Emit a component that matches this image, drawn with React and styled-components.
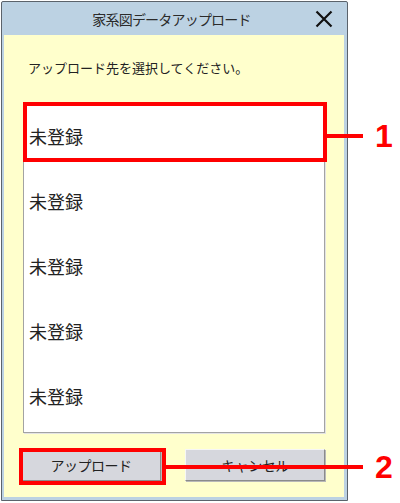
import React from 'react';
import styled, { createGlobalStyle } from 'styled-components';

const GlobalStyle = createGlobalStyle`
  html, body {
    margin: 0;
    padding: 0;
    background: #fff;
  }
  body {
    font-family: "Noto Sans CJK JP", "Noto Sans", sans-serif;
    color: #222;
  }
`;

const Stage = styled.div`
  position: relative;
  width: 400px;
  height: 503px;
  overflow: hidden;
`;

const Window = styled.section`
  display: flex;
  flex-direction: column;
  box-sizing: border-box;
  width: 347px;
  height: 500px;
  margin: 1px 0 0 1px;
  border: 1px solid #5b636b;
  border-radius: 2px 2px 0 0;
  background: #bcd2e3;
`;

const TitleBar = styled.header`
  display: grid;
  grid-template-columns: 46px 1fr 46px;
  align-items: center;
  height: 33px;
  flex-shrink: 0;
`;

const Title = styled.h1`
  grid-column: 2;
  margin: 0;
  padding-right: 6px;
  text-align: center;
  font-size: 14px;
  font-weight: 400;
  letter-spacing: -0.8px;
  color: #2b2b2b;
  white-space: nowrap;
`;

const CloseButton = styled.button`
  grid-column: 3;
  display: flex;
  align-items: center;
  justify-content: center;
  height: 33px;
  padding: 0;
  border: 0;
  background: transparent;
`;

const Body = styled.div`
  flex: 1;
  display: flex;
  flex-direction: column;
  margin: 0 3px 3px 2px;
  padding: 23px 19px 16px;
  background: #ffffcc;
`;

const Prompt = styled.p`
  margin: 0 0 25px;
  padding-left: 5px;
  font-size: 13px;
  line-height: 19px;
  color: #222;
`;

const SlotList = styled.ul`
  box-sizing: border-box;
  height: 331px;
  margin: 0;
  padding: 0 0 4px;
  list-style: none;
  background: #fff;
  border: 1px solid #a3a3a3;
  box-shadow: 1px 1px 0 #e4e4e4;
`;

const Slot = styled.li`
  display: flex;
  align-items: center;
  height: 65px;
  padding-left: 5px;
  font-size: 18px;
  color: #222;
`;

const ButtonRow = styled.div`
  display: flex;
  gap: 24px;
  margin: 16px 0 0 -2px;
`;

const Button = styled.button`
  box-sizing: border-box;
  width: 142px;
  height: 32px;
  padding: 0;
  font-family: "Noto Sans CJK JP", "Noto Sans", sans-serif;
  font-size: 14px;
  letter-spacing: -0.5px;
  color: #222;
  background: #d6d7dd;
  border: 1px solid;
  border-color: #f6f6f6 #8b8b8b #8b8b8b #f6f6f6;
  box-shadow: 1px 1px 0 #b8b8b8;
`;

const Highlight = styled.div`
  position: absolute;
  box-sizing: border-box;
  left: ${(p) => p.$x}px;
  top: ${(p) => p.$y}px;
  width: ${(p) => p.$w}px;
  height: ${(p) => p.$h}px;
  border: 4px solid #ff0000;
  pointer-events: none;
`;

const Leader = styled.div`
  position: absolute;
  left: ${(p) => p.$x}px;
  top: ${(p) => p.$y}px;
  width: ${(p) => p.$w}px;
  height: 4px;
  background: #ff0000;
`;

const Label = styled.span`
  position: absolute;
  left: 375px;
  top: ${(p) => p.$y}px;
  font-family: "Liberation Sans", Arial, sans-serif;
  font-weight: 700;
  font-size: 32px;
  line-height: 32px;
  color: #ff0000;
`;

const LINE_END = 363;

const Callout = ({ box, lineY, label }) => (
  <>
    <Highlight $x={box.x} $y={box.y} $w={box.w} $h={box.h} />
    <Leader $x={box.x + box.w} $y={lineY} $w={LINE_END - box.x - box.w} />
    <Label $y={lineY - 14}>{label}</Label>
  </>
);

const slots = ['未登録', '未登録', '未登録', '未登録', '未登録'];

const App = () => (
  <Stage>
    <GlobalStyle />
    <Window>
      <TitleBar>
        <Title>家系図データアップロード</Title>
        <CloseButton aria-label="close">
          <svg width="18" height="18" viewBox="0 0 18 18">
            <path d="M1.5 1.5 L16.5 16.5 M16.5 1.5 L1.5 16.5" stroke="#111" strokeWidth="2.2" fill="none" />
          </svg>
        </CloseButton>
      </TitleBar>
      <Body>
        <Prompt>アップロード先を選択してください。</Prompt>
        <SlotList>
          {slots.map((name, i) => (
            <Slot key={i}>{name}</Slot>
          ))}
        </SlotList>
        <ButtonRow>
          <Button>アップロード</Button>
          <Button>キャンセル</Button>
        </ButtonRow>
      </Body>
    </Window>
    <Callout box={{ x: 23, y: 102, w: 304, h: 60 }} lineY={134} label="1" />
    <Callout box={{ x: 19, y: 448, w: 147, h: 37 }} lineY={465} label="2" />
  </Stage>
);

export default App;
